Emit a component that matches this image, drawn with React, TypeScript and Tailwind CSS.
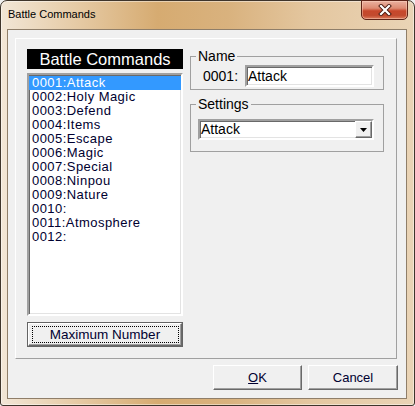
import React from 'react';

const commands = [
  '0001:Attack',
  '0002:Holy Magic',
  '0003:Defend',
  '0004:Items',
  '0005:Escape',
  '0006:Magic',
  '0007:Special',
  '0008:Ninpou',
  '0009:Nature',
  '0010:',
  '0011:Atmosphere',
  '0012:',
];

// classic 3D edges
const sunken =
  'border-2 border-t-[#a0a0a0] border-l-[#a0a0a0] border-r-white border-b-white shadow-[inset_1px_1px_0_#696969,inset_-1px_-1px_0_#e3e3e3]';
const raised =
  'border border-t-white border-l-white border-r-[#696969] border-b-[#696969] shadow-[inset_-1px_-1px_0_#a0a0a0]';

const CloseButton: React.FC = () => (
  <div className="mt-[-1px] mr-[6px] w-[47px] h-[20px] rounded-b-[5px] border border-[#5e2418] bg-[linear-gradient(180deg,#eab1a0_0%,#dd8a72_40%,#c7472b_55%,#c24a2e_80%,#dc7b5c_100%)] shadow-[inset_0_0_0_1px_rgba(255,220,200,0.45)] flex items-center justify-center">
    <svg width="14" height="12" viewBox="0 0 14 12">
      <path d="M3 2 L11 10 M11 2 L3 10" stroke="#4a1a10" strokeWidth="4" strokeLinecap="square" />
      <path d="M3 2 L11 10 M11 2 L3 10" stroke="#ffffff" strokeWidth="2.2" strokeLinecap="square" />
    </svg>
  </div>
);

const GroupBox: React.FC<{ title: string; className?: string; children: React.ReactNode }> = ({ title, className, children }) => (
  <fieldset className={`border border-[#a0a0a0] pl-[5px] ${className ?? ''}`}>
    <legend className="px-[2px] text-[14px] leading-[16px] text-black">{title}</legend>
    {children}
  </fieldset>
);

const App: React.FC = () => {
  return (
    <div className="w-[415px] h-[406px] bg-[#f0f0f0]" style={{ fontFamily: '"Liberation Sans", Arial, sans-serif' }}>
      {/* window frame */}
      <div className="w-[415px] h-[406px] flex flex-col border border-[#3f352b] rounded-t-[7px] rounded-b-[3px] bg-[linear-gradient(90deg,#f2e6d6_0%,#e6cba6_18%,#d6ab71_38%,#d9b27e_55%,#e4c7a0_75%,#ead4b6_100%)] shadow-[inset_0_0_0_1px_rgba(255,255,255,0.45)]">
        {/* title bar */}
        <div className="h-[28px] flex items-start justify-between">
          <span className="pl-[7px] pt-[7px] text-[11px] leading-[13px] text-black">Battle Commands</span>
          <CloseButton />
        </div>

        {/* client area */}
        <div className="ml-[6px] mr-[7px] h-[370px] border border-[#8f7e69] bg-[#f0f0f0] flex flex-col pl-[7px] pt-[8px] text-black">
          {/* main panel */}
          <div className="w-[382px] h-[321px] border border-t-white border-l-white border-r-[#a0a0a0] border-b-[#a0a0a0] flex pl-[11px] pt-[10px]">
            {/* left column */}
            <div className="w-[156px] flex flex-col">
              <div className="h-[20px] bg-black text-white text-center text-[16.5px] leading-[20px]">Battle Commands</div>
              <div className={`mt-[4px] h-[243px] bg-white pt-[1px] ${sunken}`}>
                {commands.map((c, i) => (
                  <div
                    key={c}
                    className={`h-[14px] pl-[3px] text-[13px] leading-[14px] tracking-[0.45px] whitespace-nowrap ${i === 0 ? 'bg-[#3399ff] text-white' : 'text-[#000030]'}`}
                  >
                    {c}
                  </div>
                ))}
              </div>
              <button className="mt-[6px] h-[25px] w-[156px] border border-[#646464] bg-[#f0f0f0] p-0">
                <div className={`h-full w-full ${raised} flex items-center justify-center p-[2px]`}>
                  <div className="h-[17px] w-[147px] border border-dotted border-black flex items-center justify-center text-[13.5px] leading-[15px] text-[#000030]">
                    Maximum Number
                  </div>
                </div>
              </button>
            </div>

            {/* right column */}
            <div className="ml-[7px] w-[194px] flex flex-col mt-[-1px]">
              <GroupBox title="Name" className="pb-[2px] pr-[9px]">
                <div className="flex items-center pl-[7px] pt-[1px]">
                  <span className="w-[42px] text-[14px] leading-[16px]">0001:</span>
                  <div className={`w-[129px] h-[22px] bg-white pl-[1px] text-[14px] leading-[18px] ${sunken}`}>Attack</div>
                </div>
              </GroupBox>

              <GroupBox title="Settings" className="mt-[6px] pb-[11px] pr-[9px]">
                <div className={`ml-[2px] mt-[7px] w-[176px] h-[21px] bg-white flex items-center justify-between ${sunken}`}>
                  <span className="pl-[1px] text-[14px] leading-[17px]">Attack</span>
                  <div className={`w-[17px] h-[17px] bg-[#f0f0f0] flex items-center justify-center ${raised}`}>
                    <svg width="7" height="4" viewBox="0 0 7 4">
                      <path d="M0 0 H7 L3.5 4 Z" fill="#000" />
                    </svg>
                  </div>
                </div>
              </GroupBox>
            </div>
          </div>

          {/* bottom buttons */}
          <div className="mt-[6px] pr-[8px] flex justify-end gap-[6px]">
            <button className={`w-[89px] h-[25px] bg-[#f0f0f0] text-[13px] leading-[15px] text-[#000030] ${raised}`}>
              <span className="underline">O</span>K
            </button>
            <button className={`w-[90px] h-[25px] bg-[#f0f0f0] text-[13px] leading-[15px] text-[#000030] ${raised}`}>
              Cancel
            </button>
          </div>
        </div>
      </div>
    </div>
  );
};

export default App;
